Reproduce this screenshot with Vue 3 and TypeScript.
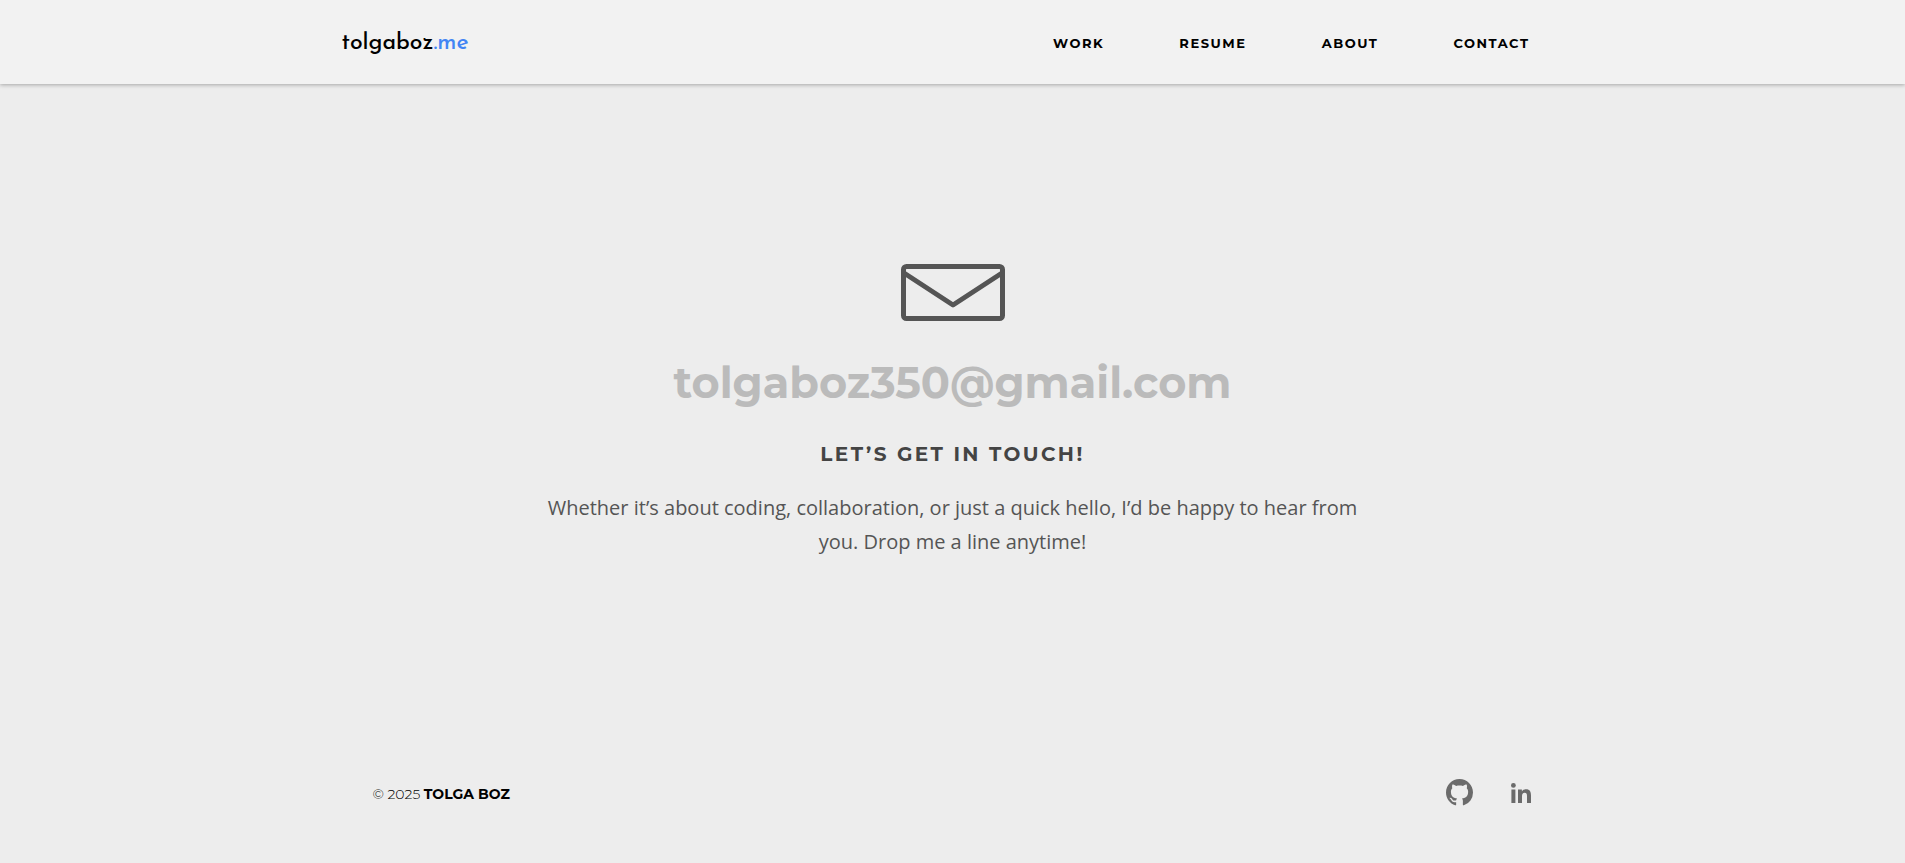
<script setup lang="ts">
interface NavItem {
  label: string
  href: string
}

const navItems: NavItem[] = [
  { label: 'WORK', href: '#work' },
  { label: 'RESUME', href: '#resume' },
  { label: 'ABOUT', href: '#about' },
  { label: 'CONTACT', href: '#contact' },
]
const email = 'tolgaboz350@gmail.com'
</script>

<template>
  <div class="page">
    <header class="header">
      <div class="header-inner">
        <a class="logo" href="#home">tolgaboz<span class="logo-suffix">.me</span></a>
        <nav class="nav" aria-label="Main">
          <a v-for="item in navItems" :key="item.label" class="nav-link" :href="item.href">{{ item.label }}</a>
        </nav>
      </div>
    </header>

    <main class="contact">
      <svg class="envelope" viewBox="0 0 104 57" aria-hidden="true">
        <rect x="2.5" y="2.5" width="99" height="52" rx="3" />
        <path d="M3 9 L52 41 L101 9" />
      </svg>
      <a class="email" :href="`mailto:${email}`">{{ email }}</a>
      <h1 class="title">LET’S GET IN TOUCH!</h1>
      <p class="message">
        Whether it’s about coding, collaboration, or just a quick hello, I’d be happy to hear from you. Drop me a line anytime!
      </p>
    </main>

    <footer class="footer">
      <p class="copyright">© 2025 <strong>TOLGA BOZ</strong></p>
      <div class="social">
        <a class="social-link" href="#github" aria-label="GitHub">
          <svg class="github" viewBox="0 0 16 16" aria-hidden="true">
            <path d="M8 0C3.580 0 0 3.580 0 8c0 3.540 2.290 6.530 5.470 7.590.400.070.550-.170.550-.380 0-.190-.010-.820-.010-1.490-2.010.370-2.530-.490-2.690-.940-.090-.230-.480-.940-.820-1.130-.280-.150-.680-.520-.010-.530.630-.010 1.080.580 1.230.820.720 1.210 1.870.870 2.330.660.070-.520.280-.870.510-1.070-1.780-.200-3.640-.890-3.640-3.950 0-.870.310-1.590.820-2.150-.080-.200-.360-1.020.080-2.120 0 0 .670-.210 2.200.820.640-.180 1.320-.270 2-.270s1.360.090 2 .270c1.530-1.040 2.200-.820 2.200-.820.440 1.100.160 1.920.080 2.120.510.560.820 1.270.820 2.150 0 3.070-1.870 3.750-3.650 3.950.290.250.540.730.540 1.480 0 1.070-.010 1.930-.010 2.200 0 .210.150.460.550.380A8.010 8.010 0 0 0 16 8c0-4.420-3.580-8-8-8z" />
          </svg>
        </a>
        <a class="social-link" href="#linkedin" aria-label="LinkedIn">
          <svg class="linkedin" viewBox="0 0 20 20" aria-hidden="true">
            <circle cx="2.400" cy="2.400" r="2.400" />
            <path d="M.4 6.600h4V20h-4z M7 6.600h3.900v1.900C11.700 7.100 13 6.300 15 6.300c4 0 5 2.600 5 6.200V20h-4v-6.700c0-2-.3-3.500-2.300-3.500-2 0-2.700 1.400-2.700 3.500V20H7z" />
          </svg>
        </a>
      </div>
    </footer>
  </div>
</template>

<style>
body {
  margin: 0;
  background: #ededed;
}
</style>

<style scoped>
.page {
  min-height: 100vh;
  display: flex;
  flex-direction: column;
  color: #000;
  font-family: Montserrat, Inter, sans-serif;
}

a {
  color: inherit;
  text-decoration: none;
}

.header {
  background: #f2f2f2;
  box-shadow: 0 1px 4px rgba(0, 0, 0, 0.3);
}

.header-inner {
  box-sizing: border-box;
  max-width: 1222px;
  height: 84px;
  margin: 0 auto;
  padding-right: 34px;
  display: flex;
  align-items: center;
  justify-content: space-between;
}

.logo {
  padding-top: 4px;
  font: 500 23px/32px "Josefin Sans", Lato, sans-serif;
}

.logo-suffix {
  color: #4285f4;
}

.nav {
  display: flex;
  gap: 75px;
  padding-top: 2px;
}

.nav-link {
  font-size: 13px;
  line-height: 20px;
  font-weight: 700;
  letter-spacing: 0.12em;
}

.contact {
  flex: 1;
  display: flex;
  flex-direction: column;
  align-items: center;
  padding: 180px 24px 0;
  text-align: center;
}

.envelope {
  width: 104px;
  height: 57px;
  fill: none;
  stroke: #555;
  stroke-width: 5;
  stroke-linejoin: round;
}

.email {
  margin-top: 32px;
  font-size: 43px;
  line-height: 60px;
  font-weight: 700;
  color: #bbb;
}

.title {
  margin: 25px 0 0;
  font-size: 20px;
  line-height: 32px;
  font-weight: 700;
  letter-spacing: 0.12em;
  color: #444;
}

.message {
  max-width: 820px;
  margin: 21px 0 0;
  font: 400 20px/34px "Open Sans", sans-serif;
  color: #555;
}

.footer {
  box-sizing: border-box;
  width: 100%;
  max-width: 1160px;
  margin: 0 auto;
  padding-bottom: 57px;
  display: flex;
  align-items: flex-end;
  justify-content: space-between;
}

.copyright {
  margin: 0;
  font-size: 14px;
  line-height: 24px;
  font-weight: 300;
}

.copyright strong {
  font-weight: 700;
}

.social {
  display: flex;
  align-items: center;
  gap: 38px;
  padding-right: 2px;
}

.social-link {
  display: flex;
  fill: #6b6b6b;
}

.github {
  width: 27px;
  height: 27px;
}

.linkedin {
  width: 20px;
  height: 20px;
}
</style>
